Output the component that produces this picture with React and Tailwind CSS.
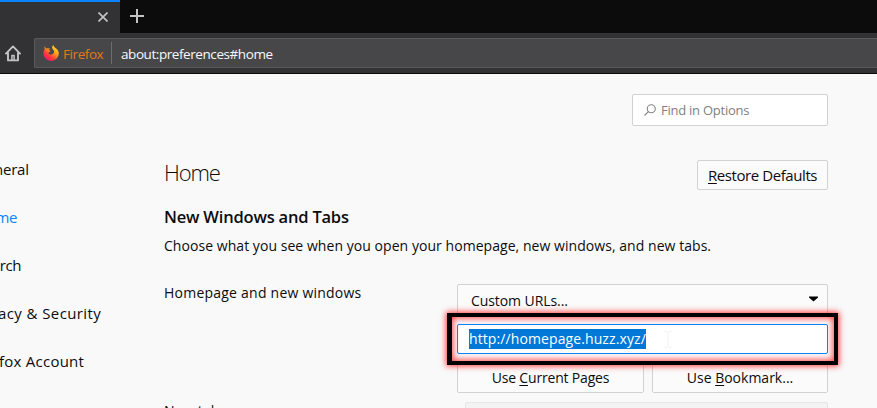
const sidebar = [
  { label: 'General', cls: '-ml-[25px] tracking-[-0.2px]' },
  { label: 'Home', cls: '-ml-[24px] text-[#0a84ff] tracking-[-0.35px]' },
  { label: 'Search', cls: '-ml-[24px] tracking-[-0.4px]' },
  { label: 'Privacy & Security', cls: '-ml-[30px] tracking-[0.4px]' },
  { label: 'Firefox Account', cls: '-ml-[28px] tracking-[0.24px]' },
];

function FirefoxLogo() {
  return (
    <svg className="shrink-0" width="16" height="16" viewBox="0 0 16 16">
      <defs>
        <linearGradient id="fx" x1="0.85" y1="0.05" x2="0.2" y2="0.95">
          <stop offset="0" stopColor="#ffe226" />
          <stop offset="0.4" stopColor="#ff9a1c" />
          <stop offset="0.7" stopColor="#ff3b3b" />
          <stop offset="1" stopColor="#f0126a" />
        </linearGradient>
      </defs>
      <path
        fill="url(#fx)"
        d="M1.6 1.2 3.1 3.5C4 3.1 4.8 3.2 5.5 3.6L7.2 3.2C6.4 3.9 6 4.4 6 5.2L7.6 5.7C7.5 6.5 6.5 6.7 5.7 7.4 5.3 8.7 6.6 9.7 8 9.5 9.9 9.5 11.1 8.2 11 6.5 11 5.2 9.8 4.5 9.3 3.5 8.8 2.4 9.3 1 10.3 0.1 10.4 1.8 12 2.4 13.2 3.6 14.7 4.8 15.8 6.5 15.8 8.6A7.7 7.3 0 0 1 8 15.9 7.6 7.3 0 0 1 .4 8.6C.3 6.4 1 5.3 1.7 4.4 1.3 3.3 1.3 2.2 1.6 1.2Z"
      />
    </svg>
  );
}

function BrowserChrome() {
  return (
    <header className="h-[74px] bg-[#323234]">
      <div className="flex h-[33px] bg-[#0c0c0d]">
        <div className="flex w-[120px] justify-end border-t-2 border-[#0a84ff] bg-[#323234] pt-[10px] pr-[12px]">
          <svg width="10" height="10" viewBox="0 0 10 10" stroke="#c4c4c5" strokeWidth="1.6">
            <path d="M.5.5 9.5 9.5M9.5.5.5 9.5" />
          </svg>
        </div>
        <svg className="mt-[9px] ml-[10px]" width="14" height="14" viewBox="0 0 14 14" stroke="#c4c4c5" strokeWidth="2">
          <path d="M7 0V14M0 7H14" />
        </svg>
      </div>
      <div className="flex h-[41px] border-b border-[#0c0c0d] pt-[5px]">
        <div className="w-[34px] pt-[7px] pl-[5px]">
          <svg width="16" height="17" viewBox="0 0 16 17" fill="none" stroke="#c4c4c5" strokeWidth="1.9" strokeLinejoin="round" strokeLinecap="round">
            <path d="M1 8.6 8 1.4 15 8.6M3 8V15.4H13V8" />
            <path d="M6.9 15V10.6H9.1V15" strokeWidth="1.5" />
          </svg>
        </div>
        <div className="flex h-[30px] flex-1 items-center rounded-l-[2px] border border-r-0 border-[#5a5a5c] bg-[#474749] pl-[8px] text-[13.5px] leading-[20px]">
          <FirefoxLogo />
          <span className="ml-[4px] w-[48px] pt-[2px] text-[#e57a10] tracking-[-0.42px] whitespace-nowrap">Firefox</span>
          <span className="h-[22px] w-px bg-[#6d6d70]" />
          <span className="ml-[9px] pt-[2px] text-[#f9f9fa] tracking-[-0.43px]">about:preferences#home</span>
        </div>
      </div>
    </header>
  );
}

export default function App() {
  return (
    <div className="h-[408px] w-[877px] overflow-hidden bg-[#f9f9fa] font-['Open_Sans','Noto_Sans',sans-serif] text-[#0c0c0d]">
      <BrowserChrome />
      <div className="flex h-[334px] overflow-hidden">
        <nav className="w-[164px] overflow-hidden pt-[71px] text-[15px]">
          {sidebar.map((s) => (
            <div key={s.label} className={`h-[48px] leading-[48px] whitespace-nowrap ${s.cls}`}>
              {s.label}
            </div>
          ))}
        </nav>
        <main className="w-[664px] pt-[20px] text-[14px] whitespace-nowrap">
          <div className="ml-auto flex h-[32px] w-[196px] items-center rounded-[2px] border border-[#d2d2d4] bg-white pl-[11px]">
            <svg width="12" height="12" viewBox="0 0 12 12" fill="none" stroke="#858587" strokeWidth="1.1">
              <circle cx="7.3" cy="4.7" r="4" />
              <path d="M4.4 7.6.5 11.5" />
            </svg>
            <span className="ml-[5px] pt-[2px] text-[13px] text-[#808082] tracking-[-0.25px]">Find in Options</span>
          </div>
          <div className="mt-[34px] flex h-[30px] items-center justify-between">
            <h1 className="-mt-[7px] text-[22px] leading-[30px] font-light tracking-[-1.1px]">Home</h1>
            <button className="h-[30px] w-[131px] rounded-[2px] border border-[#d2d2d4] bg-[#fbfbfb] text-[15px] leading-[28px] tracking-[-0.42px]">
              <span className="underline underline-offset-2">R</span>estore Defaults
            </button>
          </div>
          <h2 className="mt-[15px] h-[24px] text-[16.5px] leading-[24px] font-semibold tracking-[-0.2px]">New Windows and Tabs</h2>
          <p className="mt-[6px] h-[22px] leading-[22px] tracking-[0.05px]">Choose what you see when you open your homepage, new windows, and new tabs.</p>
          <div className="mt-[27px] flex">
            <div className="w-[293px] leading-[18px] tracking-[0.23px]">Homepage and new windows</div>
            <div className="relative w-[371px]">
              <div className="flex h-[32px] items-center justify-between rounded-[2px] border border-[#d2d2d4] bg-[#fbfbfb] pr-[9px] pl-[13px]">
                <span className="tracking-[-0.08px]">Custom URLs...</span>
                <svg className="-mt-[2px]" width="9" height="6" viewBox="0 0 9 6"><path d="M0 .5H9V1.5L4.5 5.5 0 1.5Z" /></svg>
              </div>
              <div className="mt-[8px] flex h-[30px] items-center rounded-[2px] border border-[#0a84ff] bg-white pl-[11px]">
                <span className="h-[20px] w-[177px] bg-[#0078d7] leading-[20px] text-white tracking-[0.1px]">http://homepage.huzz.xyz/</span>
                <svg className="ml-[18px]" width="8" height="17" viewBox="0 0 8 17" fill="none" stroke="#f1f1f1"><path d="M.5.5H3L4 1.5 5 .5H7.5M4 1.5V15.5M.5 16.5H3L4 15.5 5 16.5H7.5" /></svg>
              </div>
              <div className="mt-[8px] flex h-[31px] gap-[8px] leading-[29px]">
                <button className="w-[187px] rounded-[2px] border border-[#d2d2d4] bg-[#fbfbfb] tracking-[-0.18px]">Use <span className="underline underline-offset-2">C</span>urrent Pages</button>
                <button className="w-[176px] rounded-[2px] border border-[#d2d2d4] bg-[#fbfbfb]">Use <span className="underline underline-offset-2">B</span>ookmark...</button>
              </div>
              <div className="absolute top-[29px] -left-[10px] h-[52px] w-[391px] border-4 border-l-5 border-black shadow-[0_0_6px_1px_rgba(255,20,20,0.85),inset_0_0_6px_1px_rgba(255,20,20,0.85)]" />
            </div>
          </div>
          <div className="mt-[9px] flex">
            <div className="w-[301px] leading-[18px] tracking-[0.2px]">New tabs</div>
            <div className="h-[32px] flex-1 rounded-[2px] border border-[#e6e6e7] bg-[#f3f3f4]" />
          </div>
        </main>
      </div>
    </div>
  );
}
